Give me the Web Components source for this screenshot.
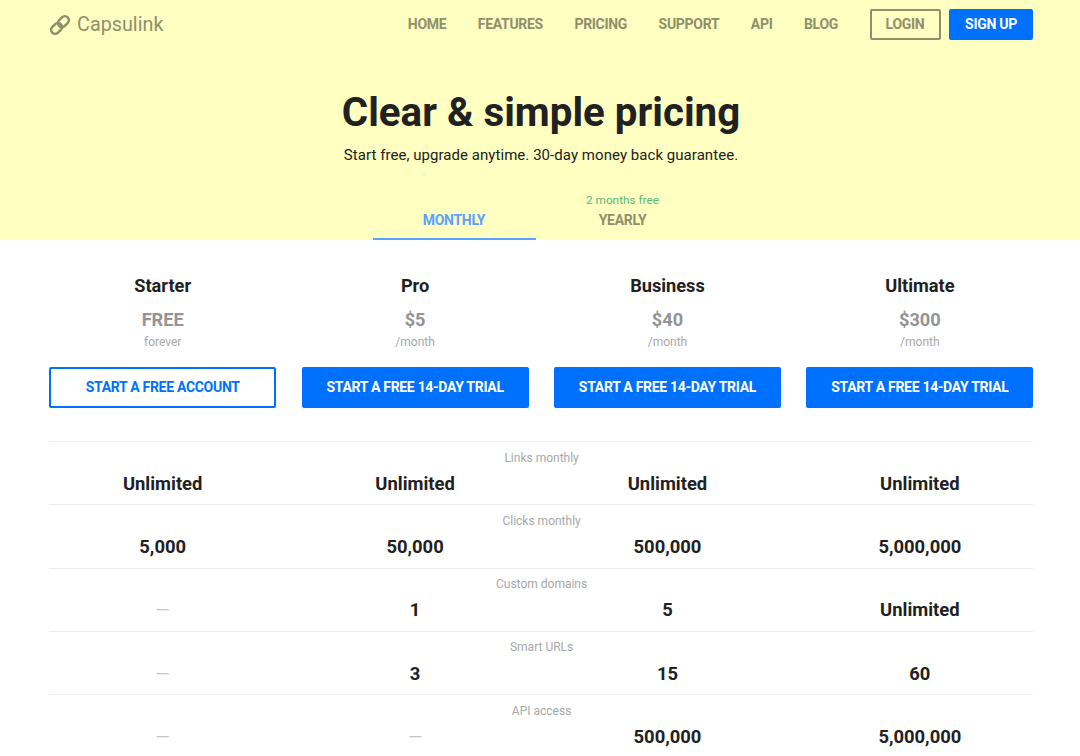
<!DOCTYPE html>
<html>
<head>
<meta charset="utf-8">
<title>Capsulink pricing</title>
<style>
  html, body { margin: 0; padding: 0; background: #fff; overflow: hidden; }
  body { font-family: Roboto, "Liberation Sans", sans-serif; color: #212121; }
</style>
</head>
<body>
<site-hero>
  <site-nav slot="nav"></site-nav>
</site-hero>
<plan-grid>
  <plan-card name="Starter" price="FREE" period="forever" cta="START A FREE ACCOUNT" outline></plan-card>
  <plan-card name="Pro" price="$5" period="/month" cta="START A FREE 14-DAY TRIAL"></plan-card>
  <plan-card name="Business" price="$40" period="/month" cta="START A FREE 14-DAY TRIAL"></plan-card>
  <plan-card name="Ultimate" price="$300" period="/month" cta="START A FREE 14-DAY TRIAL"></plan-card>
</plan-grid>
<feature-table>
  <feature-row label="Links monthly" values="Unlimited|Unlimited|Unlimited|Unlimited"></feature-row>
  <feature-row label="Clicks monthly" values="5,000|50,000|500,000|5,000,000"></feature-row>
  <feature-row label="Custom domains" values="—|1|5|Unlimited"></feature-row>
  <feature-row label="Smart URLs" values="—|3|15|60"></feature-row>
  <feature-row label="API access" values="—|—|500,000|5,000,000"></feature-row>
</feature-table>

<script>
// Small helper, every element just gets a open shadow root with its html
class Base extends HTMLElement {
  connectedCallback() {
    if (!this.shadowRoot) this.attachShadow({ mode: 'open' });
    this.shadowRoot.innerHTML = this.html();
  }
}

class SiteNav extends Base {
  html() {
    const links = ['HOME', 'FEATURES', 'PRICING', 'SUPPORT', 'API', 'BLOG'];
    return `
      <style>
        :host { display: flex; align-items: center; justify-content: space-between; height: 49px; padding: 0 47px 0 49px; }
        .logo { display: flex; align-items: center; gap: 6px; font-size: 19.8px; color: #8f8f6b; }
        svg { display: block; }
        nav { display: flex; align-items: center; font-size: 14px; font-weight: 700; letter-spacing: -.3px; color: #8f8f6b; }
        a { margin-right: 31.5px; margin-top: -1px; }
        .btn { box-sizing: border-box; height: 31px; display: flex; align-items: center; justify-content: center; border-radius: 2px; padding-bottom: 1px; }
        .login { width: 71px; border: 2px solid #8f8f6b; margin-right: 8.5px; }
        .signup { width: 84px; background: #0070ff; color: #fff; }
      </style>
      <div class="logo">
        <svg width="22" height="22" viewBox="0 0 22 22" fill="none" stroke="#8f8f6b" stroke-width="2.5">
          <rect x="-6" y="-4" width="12" height="8" rx="4" transform="translate(7.6 14.4) rotate(-45)"/>
          <rect x="-6" y="-4" width="12" height="8" rx="4" transform="translate(14.4 7.6) rotate(-45)"/>
        </svg>
        <span>Capsulink</span>
      </div>
      <nav>
        ${links.map(l => `<a>${l}</a>`).join('')}
        <div class="btn login">LOGIN</div>
        <div class="btn signup">SIGN UP</div>
      </nav>`;
  }
}

class SiteHero extends Base {
  html() {
    return `
      <style>
        :host { display: block; height: 240px; background: #ffffc2; text-align: center; overflow: hidden; }
        h1 { margin: 40px 0 0; padding-left: 2px; font-size: 40.3px; line-height: 48px; font-weight: 700; color: #212121; }
        p { margin: 7px 0 0; padding-left: 2px; font-size: 15px; line-height: 22px; color: #212121; letter-spacing: .05px; }
        .tabs { display: flex; justify-content: center; margin-top: 24px; padding-left: 2px; }
        .tab { position: relative; height: 50px; box-sizing: border-box; font-size: 14px; font-weight: 700; letter-spacing: -.3px; line-height: 20px; padding-top: 20px; }
        .monthly { width: 163px; color: #5ba2ff; border-bottom: 2px solid #5ba2ff; }
        .yearly { width: 174px; color: #8f8f6b; }
        small { position: absolute; left: 0; right: 0; top: 2px; font-size: 11.8px; font-weight: 400; letter-spacing: 0; line-height: 16px; color: #5cb87a; }
      </style>
      <slot name="nav"></slot>
      <h1>Clear &amp; simple pricing</h1>
      <p>Start free, upgrade anytime. 30-day money back guarantee.</p>
      <div class="tabs">
        <div class="tab monthly">MONTHLY</div>
        <div class="tab yearly"><small>2 months free</small>YEARLY</div>
      </div>`;
  }
}

class PlanGrid extends Base {
  html() {
    return `
      <style>
        :host { display: grid; grid-template-columns: repeat(4, 227px); column-gap: 25.4px; padding: 34px 47px 0 49.2px; }
      </style>
      <slot></slot>`;
  }
}

class PlanCard extends Base {
  html() {
    const a = n => this.getAttribute(n);
    return `
      <style>
        :host { display: block; text-align: center; }
        h3 { margin: 0; font-size: 18.2px; line-height: 24px; font-weight: 700; color: #212121; }
        .price { margin-top: 10px; font-size: 18.2px; line-height: 24px; font-weight: 700; color: #949494; }
        .period { margin-top: 1px; font-size: 12px; line-height: 18px; color: #a8a8a8; }
        .cta { box-sizing: border-box; height: 41px; margin-top: 16px; display: flex; align-items: center; justify-content: center; padding-bottom: 1px;
               border-radius: 2px; font-size: 14px; font-weight: 700; letter-spacing: -.3px; background: #0070ff; color: #fff; }
        .cta.outline { background: #fff; color: #0070ff; border: 2px solid #0070ff; }
      </style>
      <h3>${a('name')}</h3>
      <div class="price">${a('price')}</div>
      <div class="period">${a('period')}</div>
      <div class="cta ${this.hasAttribute('outline') ? 'outline' : ''}">${a('cta')}</div>`;
  }
}

class FeatureTable extends Base {
  html() {
    return `
      <style>
        :host { display: block; margin: 33px 47px 0 49.2px; }
      </style>
      <slot></slot>`;
  }
}

class FeatureRow extends Base {
  html() {
    const vals = this.getAttribute('values').split('|');
    return `
      <style>
        :host { display: block; box-sizing: border-box; height: 63.25px; border-top: 1px solid #ececec; }
        .label { padding: 7.6px 0 0 1px; height: 16px; font-size: 12px; line-height: 16px; text-align: center; color: #a8a8a8; }
        .vals { display: grid; grid-template-columns: repeat(4, 227px); column-gap: 25.4px; margin-top: 5.4px; text-align: center;
                font-size: 18.4px; line-height: 26px; font-weight: 700; color: #212121; }
        .none { color: #c4c4c4; font-weight: 400; }
      </style>
      <div class="label">${this.getAttribute('label')}</div>
      <div class="vals">${vals.map(v => `<div class="${v === '—' ? 'none' : ''}">${v}</div>`).join('')}</div>`;
  }
}

customElements.define('site-nav', SiteNav);
customElements.define('site-hero', SiteHero);
customElements.define('plan-grid', PlanGrid);
customElements.define('plan-card', PlanCard);
customElements.define('feature-table', FeatureTable);
customElements.define('feature-row', FeatureRow);
</script>
</body>
</html>
